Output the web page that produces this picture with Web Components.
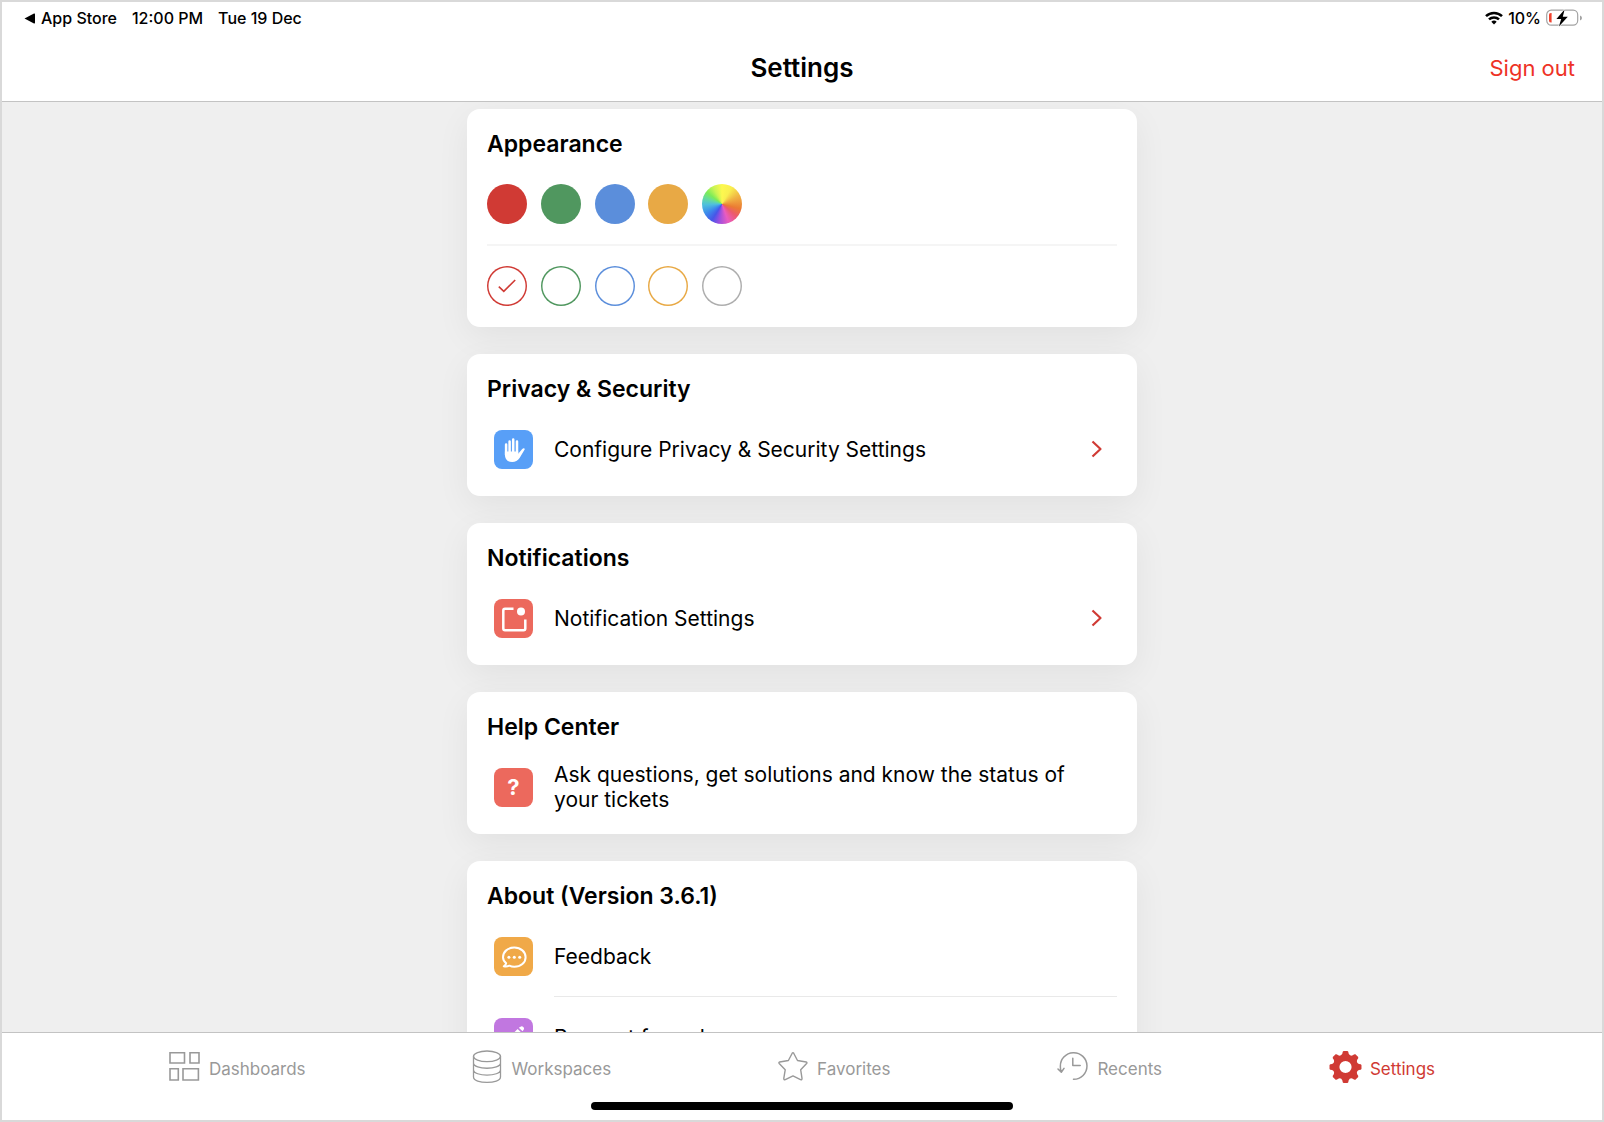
<!DOCTYPE html>
<html lang="en">
<head>
<meta charset="utf-8">
<title>Settings</title>
<style>
html, body { margin: 0; height: 100%; }
body { font-family: Inter, "Liberation Sans", sans-serif; color: #000; --accent: #d03a34; }
</style>
</head>
<body>
<settings-app></settings-app>
<script>
const define = (name, html) => {
  const t = document.createElement('template');
  t.innerHTML = html;
  customElements.define(name, class extends HTMLElement {
    constructor() {
      super();
      this.attachShadow({ mode: 'open' }).append(t.content.cloneNode(true));
    }
  });
};

define('status-bar', `
<style>
:host { display: flex; justify-content: space-between; align-items: center; height: 32px; padding: 0 20px 0 22px; font-size: 16px; line-height: 20px; font-weight: 500; }
div { display: flex; align-items: center; }
.left { gap: 15px; }
.back { gap: 6px; }
.right { gap: 5px; }
svg { display: block; }
</style>
<div class="left">
  <div class="back"><svg width="11" height="11" viewBox="0 0 11 11"><path d="M0.5 5.5 10 0.6Q11 0.3 11 1.2V9.8Q11 10.7 10 10.4Z"/></svg><span>App Store</span></div>
  <span>12:00 PM</span><span>Tue 19 Dec</span>
</div>
<div class="right">
  <svg width="18" height="14" viewBox="0 0 18 14" fill="none" stroke="#000" stroke-width="2.5"><path d="M1 5.2a11.4 11.4 0 0 1 16 0M4 8.4a7.2 7.2 0 0 1 10 0"/><path d="M9 13.6 6.3 10.7a3.9 3.9 0 0 1 5.4 0Z" fill="#000" stroke="none"/></svg>
  <span>10%</span>
  <svg width="36" height="18" viewBox="0 0 36 18"><rect x=".7" y="1.2" width="31" height="15" rx="4.6" fill="#fff" stroke="#a3a3a3" stroke-width="1.2"/><path d="M34 6.4q2 .8 2 2.6t-2 2.6Z" fill="#a3a3a3"/><path d="M3 5.4Q3 4 5.6 4V13.6Q3 13.6 3 12Z" fill="#f0432f"/><path d="M18.6 .5 10.4 9.9h4.8l-2.3 7.5 8.9-9.7h-5Z" fill="#000" stroke="#fff" stroke-width="1.2" paint-order="stroke"/></svg>
</div>`);

define('nav-header', `
<style>
:host { display: grid; grid-template-columns: 1fr auto 1fr; align-items: center; height: 67px; padding: 0 27px; }
h1 { grid-column: 2; margin: 0; font-size: 26px; line-height: 32px; font-weight: 600; }
button { justify-self: end; border: 0; padding: 0; background: none; font: 400 22px/28px Inter, "Liberation Sans", sans-serif; color: #ee3225; }
</style>
<h1><slot></slot></h1>
<button type="button"><slot name="action"></slot></button>`);

define('settings-card', `
<style>
:host { display: block; border-radius: 13px; background: #fff; box-shadow: 0 10px 34px rgba(0,0,0,.06); padding-bottom: var(--pad-end, 7px); }
h2 { margin: 0; padding: 21px 20px 6px; font-size: 23px; line-height: 28px; font-weight: 600; }
</style>
<section><h2><slot name="title"></slot></h2><slot></slot></section>`);

define('appearance-picker', `
<style>
:host { display: block; padding: 0 20px; }
.row { display: flex; justify-content: space-between; align-items: center; width: 255px; height: 80px; margin: 0; border: 0; padding: 0; }
hr { margin: 0; border: 0; height: 2px; background: #f5f5f5; }
button, input { appearance: none; box-sizing: border-box; display: block; width: 40px; height: 40px; margin: 0; padding: 0; border: 0; border-radius: 50%; background: var(--c); }
input { background: radial-gradient(circle, transparent 18px, var(--c) 19px, var(--c) 20px); }
label { display: grid; place-items: center; }
label > * { grid-area: 1 / 1; }
svg { pointer-events: none; }
.wheel { background: conic-gradient(#fdf84f 0deg, #f9ef50 30deg, #f0b343 65deg, #eb7a33 105deg, #ec5a6d 130deg, #ea5cc0 160deg, #9a4fe0 190deg, #4656e8 212deg, #3d8cec 240deg, #4fc0dc 268deg, #66dc9c 290deg, #7cec58 308deg, #c8f454 332deg, #fdf84f 360deg); }
</style>
<div class="row">
  <button type="button" aria-label="Red theme" style="--c:#d03a34"></button>
  <button type="button" aria-label="Green theme" style="--c:#50975f"></button>
  <button type="button" aria-label="Blue theme" style="--c:#5b8edb"></button>
  <button type="button" aria-label="Orange theme" style="--c:#e8a945"></button>
  <button type="button" aria-label="Multicolour theme" class="wheel"></button>
</div>
<hr>
<div class="row" role="radiogroup" aria-label="Outline theme">
  <label><input type="radio" name="o" aria-label="Red" checked style="--c:#d03a34"><svg width="18" height="14" viewBox="0 0 18 14" fill="none" stroke="#d03a34" stroke-width="1.6"><path d="M.8 7.6 5.8 12.4 17.2 1"/></svg></label>
  <label><input type="radio" name="o" aria-label="Green" style="--c:#50975f"></label>
  <label><input type="radio" name="o" aria-label="Blue" style="--c:#5b8edb"></label>
  <label><input type="radio" name="o" aria-label="Orange" style="--c:#e8a945"></label>
  <label><input type="radio" name="o" aria-label="Grey" style="--c:#adadad"></label>
</div>`);

define('settings-row', `
<style>
:host { display: block; }
a { display: flex; align-items: center; height: 80px; padding: 0 34px 0 27px; color: #000; text-decoration: none; font-size: 21px; line-height: 25px; }
.tile { display: flex; flex: none; width: 39px; height: 39px; margin-right: 21px; border-radius: 8px; background: var(--tile); color: #fff; }
.text { flex: 1; padding-right: 24px; }
.chev { display: none; }
:host([chevron]) .chev { display: block; }
:host([divided])::after { content: ""; display: block; height: 1px; margin: 0 20px 0 87px; background: #e9e9e9; }
</style>
<a href="#"><span class="tile"><slot name="icon"></slot></span><span class="text"><slot></slot></span><svg class="chev" width="12" height="18" viewBox="0 0 12 18" fill="none" stroke="#d03a34" stroke-width="2.2" stroke-linejoin="round"><path d="M1.5 1.5 9.5 9 1.5 16.5"/></svg></a>`);

define('tab-item', `
<style>
:host { display: block; color: #999; }
:host([selected]) { color: var(--accent); }
a { display: flex; align-items: center; gap: 8px; height: 34px; color: inherit; text-decoration: none; font-size: 17px; line-height: 22px; }
slot[name=icon] { display: block; }
.text { padding-top: 3px; }
</style>
<a href="#"><slot name="icon"></slot><span class="text"><slot></slot></span></a>`);

define('tab-bar', `
<style>
:host { display: flex; flex-direction: column; align-items: center; height: 87px; border-top: 1px solid #c3c3c3; background: #fff; }
nav { display: flex; justify-content: space-evenly; width: 100%; padding: 17px 0 18px; }
.home { width: 422px; max-width: 60%; height: 8px; border-radius: 4px; background: #000; }
</style>
<nav aria-label="Main"><slot></slot></nav><div class="home"></div>`);

// Eight-toothed cog with rounded tips and rounded valleys.
const gear = () => {
  let d = '';
  const at = (deg, r) => {
    const a = deg * Math.PI / 180;
    return (16.5 + r * Math.sin(a)).toFixed(2) + ' ' + (17 - r * Math.cos(a)).toFixed(2);
  };
  for (let i = 0; i < 8; i++) {
    const c = i * 45;
    d += (i ? 'L' : 'M') + at(c - 13, 13.8) + 'Q' + at(c - 11, 16) + ' ' + at(c - 7, 16.1) +
      'L' + at(c + 7, 16.1) + 'Q' + at(c + 11, 16) + ' ' + at(c + 13, 13.8) +
      'Q' + at(c + 22.5, 11.4) + ' ' + at(c + 32, 13.8);
  }
  return d + 'ZM16.5 10.9a6.1 6.1 0 1 0 0 12.2a6.1 6.1 0 1 0 0-12.2Z';
};

define('settings-app', `
<style>
:host { display: flex; flex-direction: column; box-sizing: border-box; height: 100vh; border: 2px solid #d9d9d9; background: #efefef; }
header { flex: none; background: #fff; border-bottom: 1px solid #c3c3c3; }
main { flex: 1; min-height: 0; overflow-y: auto; scrollbar-width: none; }
.list { display: flex; flex-direction: column; gap: 27px; max-width: 670px; margin: 0 auto; padding: 7px 0 27px; }
svg { display: block; }
.glyph { margin: auto; font-size: 22px; line-height: 24px; font-weight: 700; color: #fff; }
tab-bar { flex: none; }
</style>
<header><status-bar></status-bar><nav-header>Settings<span slot="action">Sign out</span></nav-header></header>
<main><div class="list">
  <settings-card style="--pad-end:1px"><span slot="title">Appearance</span><appearance-picker></appearance-picker></settings-card>
  <settings-card><span slot="title">Privacy &amp; Security</span>
    <settings-row chevron style="--tile:#589ff7"><svg slot="icon" width="39" height="39" viewBox="0 0 39 39" fill="none" stroke="#fff" stroke-linecap="round" stroke-width="2.5"><path d="M12.1 14.5V25M15.6 11.4V23M19.2 9.5V23M23 11.4V23"/><path d="M10.9 21.5H24.2V23.8L28 19.3Q29.6 17.700 30.5 18.6Q31 19.2 30.2 20.3L25.6 28Q22.8 32 18.3 32Q10.900 32 10.9 24.5Z" fill="#fff" stroke="none"/></svg>Configure Privacy &amp; Security Settings</settings-row></settings-card>
  <settings-card><span slot="title">Notifications</span>
    <settings-row chevron style="--tile:#ec695d"><svg slot="icon" width="39" height="39" viewBox="0 0 39 39" fill="none" stroke="#fff" stroke-width="2.5"><path d="M19.5 9.8H11Q9.3 9.8 9.3 11.5V29.5Q9.3 31.2 11 31.2H29.6Q31.3 31.2 31.3 29.5V20.5"/><circle cx="27" cy="12.5" r="4" fill="#fff" stroke="none"/></svg>Notification Settings</settings-row></settings-card>
  <settings-card><span slot="title">Help Center</span>
    <settings-row style="--tile:#ec695d"><span slot="icon" class="glyph">?</span>Ask questions, get solutions and know the status of your tickets</settings-row></settings-card>
  <settings-card><span slot="title">About (Version 3.6.1)</span>
    <settings-row divided style="--tile:#f0a948"><svg slot="icon" width="39" height="39" viewBox="0 0 39 39" fill="none" stroke="#fff" stroke-width="2" stroke-linejoin="round"><path d="M12.2 26.2Q9 23.6 9 20.2C9 14.8 13.8 10.6 20.3 10.6S31.6 14.8 31.6 20.2S26.8 29.8 20.3 29.8Q17.6 29.8 15.4 28.7Q12.8 29.9 9.8 29.3Q12 28 12.2 26.2Z"/><g fill="#fff" stroke="none"><circle cx="14.9" cy="20.3" r="1.5"/><circle cx="20.3" cy="20.3" r="1.5"/><circle cx="25.7" cy="20.3" r="1.5"/></g></svg>Feedback</settings-row>
    <settings-row style="--tile:#c177e0"><svg slot="icon" width="39" height="39" viewBox="0 0 39 39" fill="#fff"><path d="M24.8 9.8 27 8.4Q28.2 7.9 29.3 8.9Q30.4 10 29.9 11.2L28.6 13.3ZM23.6 11 27.4 14.6 17 25 12 26.5 13.4 21.2Z"/></svg>Request for a demo</settings-row></settings-card>
</div></main>
<tab-bar>
  <tab-item><svg slot="icon" width="32" height="34" viewBox="0 0 32 34" fill="none" stroke="currentColor" stroke-width="1.6"><path d="M1 2.700H15.500V13H1ZM21 2.700H30V13H21ZM1 18.700H9.300V30H1ZM14 18.700H29.400V30H14Z"/></svg>Dashboards</tab-item>
  <tab-item><svg slot="icon" width="31" height="34" viewBox="0 0 31 34" fill="none" stroke="currentColor" stroke-width="1.3"><ellipse cx="15" cy="6.3" rx="13.5" ry="5.3"/><path d="M1.5 6.3V27C1.5 34.2 28.5 34.2 28.5 27V6.3M1.5 13C1.5 20 28.5 20 28.5 13M1.5 19.700C1.5 26.900 28.500 26.900 28.500 19.700"/></svg>Workspaces</tab-item>
  <tab-item><svg slot="icon" width="31" height="34" viewBox="0 0 31 34" fill="none" stroke="currentColor" stroke-width="1.4" stroke-linejoin="round"><path d="M14.2 3.200Q15 2 15.7 3.200L19.500 10.500 28.200 12Q29.500 12.400 28.600 13.500L22.700 19.800 24 28.400Q24 30.200 22.500 29.700L15 25.900 7.300 29.700Q5.800 30.200 5.800 28.400L7.200 19.800 1.200 13.500Q.4 12.400 1.700 12L10.400 10.500Z"/></svg>Favorites</tab-item>
  <tab-item><svg slot="icon" width="32" height="34" viewBox="0 0 32 34" fill="none" stroke="currentColor" stroke-width="1.5" stroke-linecap="round" stroke-linejoin="round"><path d="M16.500 29.300A13.300 13.300 0 1 0 3.400 16.800Q3.300 19 4.200 22M1 19 4.300 22.300 7 18.400M15.800 8.300V15.500H23.200"/></svg>Recents</tab-item>
  <tab-item selected><svg slot="icon" width="33" height="34" viewBox="0 0 33 34"><path fill="currentColor" fill-rule="evenodd" d="${gear()}"/></svg>Settings</tab-item>
</tab-bar>`);
</script>
</body>
</html>
